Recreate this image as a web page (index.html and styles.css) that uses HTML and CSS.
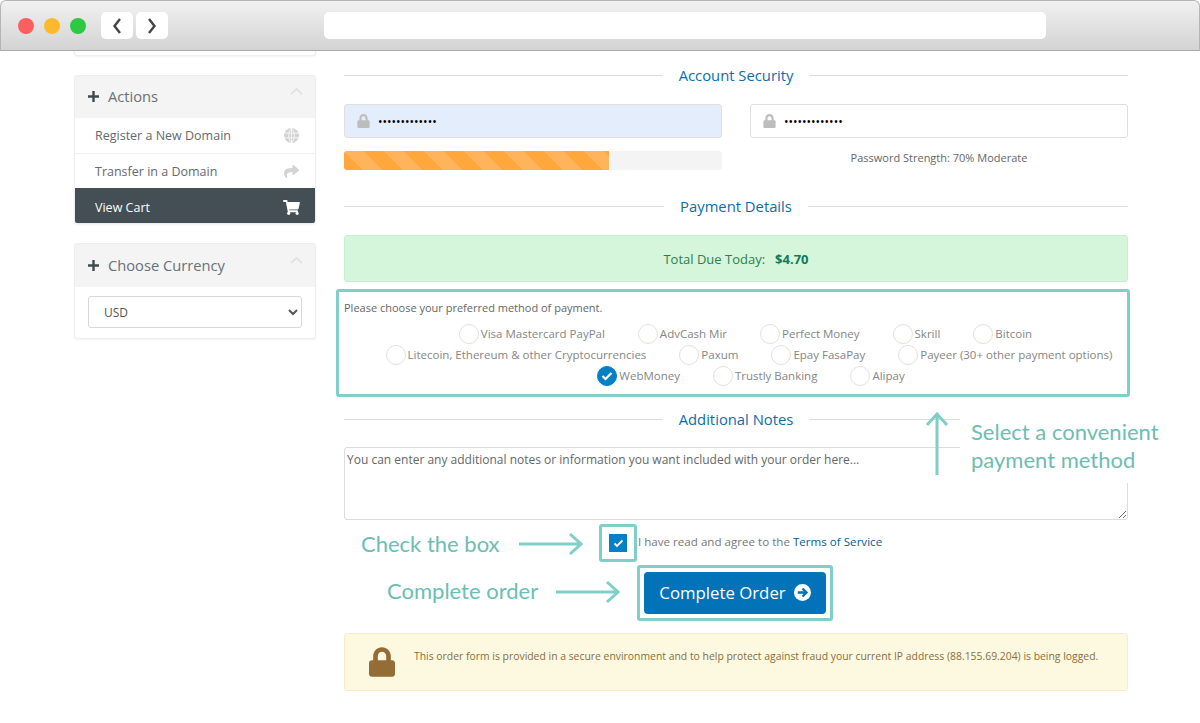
FILE: index.html
```html
<!DOCTYPE html>
<html lang="en">
<head>
<meta charset="utf-8">
<title>Checkout</title>
<link rel="stylesheet" href="styles.css">
</head>
<body>
<div class="window">
  <header class="topbar">
    <div class="dots"><span class="dot red"></span><span class="dot yellow"></span><span class="dot green"></span></div>
    <div class="navs">
      <span class="nav"><svg width="10" height="18" viewBox="0 0 10 18"><path d="M8 2 2.500 9 8 16" fill="none" stroke="#444" stroke-width="2.400"/></svg></span>
      <span class="nav"><svg width="10" height="18" viewBox="0 0 10 18"><path d="M2 2 7.500 9 2 16" fill="none" stroke="#444" stroke-width="2.400"/></svg></span>
    </div>
    <div class="url"></div>
  </header>

  <div class="page">
    <aside class="sidebar">
      <div class="panel sliver"></div>
      <section class="panel">
        <div class="panel-head">
          <svg class="plus" width="13" height="13" viewBox="0 0 13 13"><path d="M6.500 1v11M1 6.500h11" stroke="#3f4a4f" stroke-width="2.400"/></svg>
          <span>Actions</span>
          <svg class="chev" width="13" height="8" viewBox="0 0 13 8"><path d="M1 7 6.500 2 12 7" fill="none" stroke="#e2e2e2" stroke-width="2"/></svg>
        </div>
        <a class="item">Register a New Domain
          <svg class="ico" width="15" height="15" viewBox="0 0 16 16"><circle cx="8" cy="8" r="8" fill="#d3d3d3"/><path d="M0 5.500h16M0 10.500h16M8 0v16M8 0C4 4 4 12 8 16M8 0c4 4 4 12 0 16" fill="none" stroke="#fff" stroke-width=".8"/></svg>
        </a>
        <a class="item">Transfer in a Domain
          <svg class="ico" width="15" height="15" viewBox="0 0 512 512"><path fill="#d3d3d3" d="M503.691 189.836L327.687 37.851C312.281 24.546 288 35.347 288 56.015v80.053C127.371 137.907 0 170.1 0 322.326c0 61.441 39.581 122.309 83.333 154.132 13.653 9.931 33.111-2.533 28.077-18.631C66.066 312.814 132.917 274.316 288 272.085V360c0 20.7 24.3 31.453 39.687 18.164l176.004-152c11.071-9.562 11.086-26.753 0-36.328z"/></svg>
        </a>
        <a class="item active">View Cart
          <svg class="ico" width="17" height="15" viewBox="0 0 576 512"><path fill="#fff" d="M528.12 301.319l47.273-208C578.806 78.301 567.391 64 551.99 64H159.208l-9.166-44.81C147.758 8.021 137.93 0 126.529 0H24C10.745 0 0 10.745 0 24v16c0 13.255 10.745 24 24 24h69.883l70.248 343.435C147.325 417.1 136 435.222 136 456c0 30.928 25.072 56 56 56s56-25.072 56-56c0-15.674-6.447-29.835-16.824-40h209.647C430.447 426.165 424 440.326 424 456c0 30.928 25.072 56 56 56s56-25.072 56-56c0-22.172-12.888-41.332-31.579-50.405l5.517-24.276c3.413-15.018-8.002-29.319-23.403-29.319H218.117l-6.545-32h293.145c11.206 0 20.92-7.754 23.403-18.681z"/></svg>
        </a>
      </section>
      <section class="panel">
        <div class="panel-head tall">
          <svg class="plus" width="13" height="13" viewBox="0 0 13 13"><path d="M6.500 1v11M1 6.500h11" stroke="#3f4a4f" stroke-width="2.400"/></svg>
          <span>Choose Currency</span>
          <svg class="chev" width="13" height="8" viewBox="0 0 13 8"><path d="M1 7 6.500 2 12 7" fill="none" stroke="#e2e2e2" stroke-width="2"/></svg>
        </div>
        <div class="panel-body">
          <select class="currency"><option>USD</option></select>
        </div>
      </section>
    </aside>

    <main class="main">
      <h2 class="divider first"><span>Account Security</span></h2>
      <div class="pw-grid">
        <div class="pw-col">
          <label class="pw autofill">
            <svg width="13" height="14" viewBox="0 0 448 512"><path fill="#bdbdbd" d="M400 224h-24v-72C376 68.200 307.800 0 224 0S72 68.200 72 152v72H48c-26.500 0-48 21.500-48 48v192c0 26.500 21.500 48 48 48h352c26.500 0 48-21.500 48-48V272c0-26.500-21.500-48-48-48zm-104 0H152v-72c0-39.700 32.300-72 72-72s72 32.300 72 72v72z"/></svg>
            <input type="password" value="Passw0rd12345">
          </label>
          <div class="progress"><div class="bar" style="width:70%"></div></div>
        </div>
        <div class="pw-col">
          <label class="pw">
            <svg width="13" height="14" viewBox="0 0 448 512"><path fill="#bdbdbd" d="M400 224h-24v-72C376 68.200 307.800 0 224 0S72 68.200 72 152v72H48c-26.500 0-48 21.500-48 48v192c0 26.500 21.500 48 48 48h352c26.500 0 48-21.500 48-48V272c0-26.500-21.500-48-48-48zm-104 0H152v-72c0-39.700 32.300-72 72-72s72 32.300 72 72v72z"/></svg>
            <input type="password" value="Passw0rd12345">
          </label>
          <p class="strength">Password Strength: 70% Moderate</p>
        </div>
      </div>

      <h2 class="divider"><span>Payment Details</span></h2>
      <div class="total">Total Due Today: <b>$4.70</b></div>

      <section class="methods">
        <p class="methods-intro">Please choose your preferred method of payment.</p>
        <div class="method-row r1">
          <span class="method"><i class="radio"></i>Visa Mastercard PayPal</span>
          <span class="method"><i class="radio"></i>AdvCash Mir</span>
          <span class="method"><i class="radio"></i>Perfect Money</span>
          <span class="method"><i class="radio"></i>Skrill</span>
          <span class="method"><i class="radio"></i>Bitcoin</span>
        </div>
        <div class="method-row r2">
          <span class="method"><i class="radio"></i>Litecoin, Ethereum &amp; other Cryptocurrencies</span>
          <span class="method"><i class="radio"></i>Paxum</span>
          <span class="method"><i class="radio"></i>Epay FasaPay</span>
          <span class="method"><i class="radio"></i>Payeer (30+ other payment options)</span>
        </div>
        <div class="method-row r3">
          <span class="method"><i class="radio on"><svg width="12" height="10" viewBox="0 0 12 10"><path d="M1.500 5 4.500 8 10.500 2" fill="none" stroke="#fff" stroke-width="2.200"/></svg></i>WebMoney</span>
          <span class="method"><i class="radio"></i>Trustly Banking</span>
          <span class="method"><i class="radio"></i>Alipay</span>
        </div>
      </section>

      <h2 class="divider notes-head"><span>Additional Notes</span></h2>
      <textarea class="notes" placeholder="You can enter any additional notes or information you want included with your order here..."></textarea>

      <div class="tos">
        <span class="tos-box"><i class="tick"><svg width="11" height="9" viewBox="0 0 11 9"><path d="M1.500 4.500 4 7 9.500 1.500" fill="none" stroke="#fff" stroke-width="1.800"/></svg></i></span>
        <span class="tos-text">I have read and agree to the <a class="link">Terms of Service</a></span>
      </div>

      <div class="submit-wrap">
        <button class="submit" type="button">Complete Order
          <svg width="17" height="17" viewBox="0 0 16 16"><circle cx="8" cy="8" r="8" fill="#fff"/><path d="M3.500 8h8M8 4.200 11.800 8 8 11.800" fill="none" stroke="#0272b9" stroke-width="2.200"/></svg>
        </button>
      </div>

      <div class="alert">
        <svg width="26" height="30" viewBox="0 0 448 512"><path fill="#946c37" d="M400 224h-24v-72C376 68.200 307.800 0 224 0S72 68.200 72 152v72H48c-26.500 0-48 21.500-48 48v192c0 26.500 21.500 48 48 48h352c26.500 0 48-21.500 48-48V272c0-26.500-21.500-48-48-48zm-104 0H152v-72c0-39.700 32.300-72 72-72s72 32.300 72 72v72z"/></svg>
        <p>This order form is provided in a secure environment and to help protect against fraud your current IP address (88.155.69.204) is being logged.</p>
      </div>
    </main>
  </div>

  <div class="note note-select">
    <svg class="arrow-up" width="24" height="64" viewBox="0 0 24 64"><path d="M12 63V2M2 13 12 2 22 13" fill="none" stroke="#7fcfc9" stroke-width="3"/></svg>
    <p>Select a convenient<br>payment method</p>
  </div>
  <div class="note note-check">
    <p>Check the box</p>
    <svg width="64" height="24" viewBox="0 0 64 24"><path d="M0 12h62M51 2 62 12 51 22" fill="none" stroke="#7fcfc9" stroke-width="3"/></svg>
  </div>
  <div class="note note-complete">
    <p>Complete order</p>
    <svg width="64" height="24" viewBox="0 0 64 24"><path d="M0 12h62M51 2 62 12 51 22" fill="none" stroke="#7fcfc9" stroke-width="3"/></svg>
  </div>
</div>
</body>
</html>
```
FILE: styles.css
```css
* { box-sizing: border-box; }
html, body { margin: 0; padding: 0; background: #fff; }
body { font-family: "Open Sans", sans-serif; color: #555; }

.window { position: relative; width: 1200px; height: 723px; overflow: hidden; }

.topbar {
  height: 51px;
  display: flex;
  align-items: center;
  padding: 0 0 0 17px;
  background: linear-gradient(#f1f1f1, #d3d3d3);
  border: 1px solid #b5b5b5;
  border-bottom-color: #a9a9a9;
  border-radius: 6px 6px 0 0;
}
.dots { display: flex; gap: 10px; margin-top: 1px; }
.dot { width: 16px; height: 16px; border-radius: 50%; }
.red { background: #fb5f5f; }
.yellow { background: #fdb92e; }
.green { background: #2dc844; }
.navs { display: flex; gap: 3px; margin-left: 15px; }
.nav {
  width: 32px; height: 27px;
  display: flex; align-items: center; justify-content: center;
  background: #fff; border-radius: 5px;
}
.url { width: 722px; height: 27px; margin-left: 156px; background: #fff; border-radius: 5px; }

.page {
  display: grid;
  grid-template-columns: 242px 784px;
  column-gap: 28px;
  padding-left: 74px;
}

.panel {
  border: 1px solid #eceded;
  border-radius: 3px;
  background: #fff;
  margin-bottom: 19px;
  box-shadow: 0 1px 2px rgba(0,0,0,.05);
  overflow: hidden;
}
.panel.sliver { height: 5px; border-top: 0; border-radius: 0 0 3px 3px; }
.panel-head {
  height: 42px;
  display: flex;
  align-items: center;
  gap: 8px;
  padding: 0 12px 2px 13px;
  background: #f4f4f4;
  font-size: 14.700px;
  color: #66717a;
}
.panel-head.tall { height: 43px; padding-bottom: 1px; }
.plus { margin-left: -1px; }
.chev { margin-left: auto; margin-top: -10px; }
.item {
  height: 35px;
  display: flex;
  align-items: center;
  justify-content: space-between;
  padding: 0 16px 0 20px;
  font-size: 12.500px;
  color: #66686c;
  border-top: 1px solid #f0f0f0;
}
.item:first-of-type { border-top: 0; }
.item.active { background: #434f54; color: #fff; border-top: 0; height: 36px; padding: 2px 15px 0 20px; margin-bottom: -1px; }
.panel-body { padding: 9px 13px 10px; }
.currency {
  display: block;
  width: 100%;
  height: 32px;
  padding: 0 11px;
  font: 12px "Open Sans", sans-serif;
  color: #555;
  background: #fff;
  border: 1px solid #d8d8d8;
  border-radius: 3px;
}

.divider {
  display: flex;
  align-items: center;
  gap: 16px;
  margin: 0;
  height: 20px;
  font-size: 14.800px;
  font-weight: 400;
  color: #0b6ea8;
}
.divider::before, .divider::after { content: ""; flex: 1; height: 1px; background: #dcdcdc; }
.divider.first { margin-top: 14px; }

.pw-grid {
  display: grid;
  grid-template-columns: 378px 378px;
  column-gap: 28px;
  margin-top: 19px;
}
.pw {
  display: flex;
  align-items: center;
  gap: 8px;
  height: 34px;
  padding: 0 12px;
  border: 1px solid #dfdfdf;
  border-radius: 3px;
  background: #fff;
}
.pw.autofill { background: #e4edfc; }
.pw input {
  flex: 1;
  min-width: 0;
  border: 0;
  outline: 0;
  padding: 0;
  background: transparent;
  font: 12px "Open Sans", sans-serif;
  color: #000;
}
.progress { height: 19px; margin-top: 13px; background: #f4f4f4; border-radius: 3px; overflow: hidden; }
.bar {
  height: 100%;
  background-color: #ffa63d;
  background-image: linear-gradient(45deg, rgba(255,255,255,.15) 25%, transparent 25%, transparent 50%, rgba(255,255,255,.15) 50%, rgba(255,255,255,.15) 75%, transparent 75%, transparent);
  background-size: 40px 40px;
}
.strength { margin: 12px 0 0; text-align: center; font-size: 11px; color: #666; }

.pw-grid + .divider { margin-top: 26px; }

.total {
  height: 47px;
  margin-top: 19px;
  display: flex;
  align-items: center;
  justify-content: center;
  gap: 10px;
  background: #d5f6da;
  border: 1px solid #c8edd0;
  border-radius: 3px;
  font-size: 13px;
  color: #2f7d4f;
}
.total b { color: #0f7a5c; font-weight: 700; }

.methods {
  margin: 7px -2px 0 -8px;
  height: 108px;
  padding: 8px 2px 0 5px;
  border: 3px solid #7fcfc9;
  border-radius: 3px;
}
.methods-intro { margin: 0 0 8px; font-size: 11px; line-height: 15px; color: #666; }
.method-row {
  display: flex;
  justify-content: center;
  gap: 33px;
  height: 21px;
}
.method-row.r1 { padding-left: 22px; }
.method-row.r2 { padding-left: 29px; }
.method-row.r3 { padding-left: 33px; }
.method { display: flex; align-items: center; gap: 2px; font-size: 11.500px; color: #858585; white-space: nowrap; }
.radio {
  width: 20px; height: 20px;
  display: flex; align-items: center; justify-content: center;
  border: 1px solid #e3e1dc;
  border-radius: 50%;
  background: #fff;
}
.radio.on { background: #0580c7; border-color: #0580c7; }

.divider.notes-head { margin-top: 12px; }
.notes {
  display: block;
  width: 100%;
  height: 73px;
  margin-top: 18px;
  padding: 3px 2px;
  border: 1px solid #dcdcdc;
  border-radius: 3px;
  font: 12px "Open Sans", sans-serif;
  outline: 0;
}
.notes::placeholder { color: #666; opacity: 1; }

.tos { display: flex; align-items: center; margin: 4px 0 0 255px; height: 38px; }
.tos-box {
  width: 38px; height: 38px;
  display: flex; align-items: center; justify-content: center;
  border: 3px solid #7fcfc9;
  border-radius: 3px;
}
.tick { width: 18px; height: 18px; display: flex; align-items: center; justify-content: center; background: #0580c7; }
.tos-text { margin: 0 0 4px 1px; font-size: 11.600px; color: #777; }
.link { color: #0b5c8e; }

.submit-wrap {
  width: 196px;
  height: 56px;
  margin: 3px 0 0 293px;
  padding: 4px;
  border: 3px solid #7fcfc9;
  border-radius: 3px;
}
.submit {
  width: 100%;
  height: 100%;
  display: flex;
  align-items: center;
  justify-content: center;
  gap: 8px;
  padding: 0 0 2px;
  border: 0;
  border-radius: 4px;
  background: #0272b9;
  color: #fff;
  font: 16.800px "Open Sans", sans-serif;
}

.alert {
  display: flex;
  align-items: center;
  gap: 19px;
  height: 58px;
  margin-top: 12px;
  padding: 0 24px;
  background: #fdf9e0;
  border: 1px solid #f8eccd;
  border-radius: 3px;
}
.alert p { margin: 0 0 12px; font-size: 10.400px; color: #8a6d3b; white-space: nowrap; }

.note { position: absolute; display: flex; font-family: Lato, sans-serif; color: #6cbdb4; font-size: 22px; line-height: 28px; }
.note p { margin: 0; }
.note-select {
  left: 925px; top: 412px; width: 240px; height: 71px;
  gap: 22px;
  background: linear-gradient(to right, transparent 35px, #fff 35px);
}
.arrow-up { flex: none; }
.note-select p { padding-top: 6px; }
.note-check { left: 361px; top: 530px; align-items: center; gap: 19px; }
.note-complete { left: 387px; top: 577px; align-items: center; gap: 18px; }
.note-complete svg { margin-top: 2px; }
```
